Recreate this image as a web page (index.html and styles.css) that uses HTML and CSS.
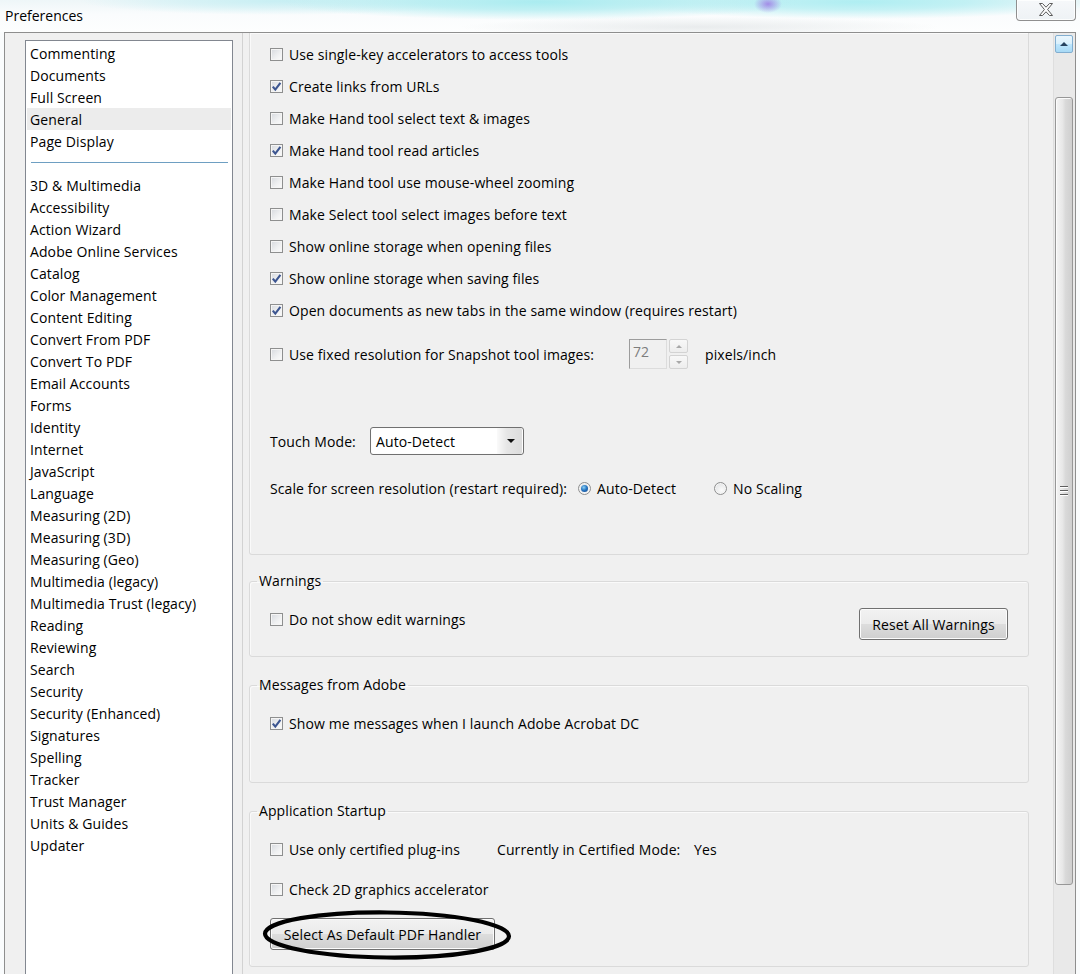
FILE: index.html
```html
<!DOCTYPE html>
<html lang="en">
<head>
<meta charset="utf-8">
<title>Preferences</title>
<link rel="stylesheet" href="styles.css">
</head>
<body>
<div class="window">
  <div class="titlebar">
    <span class="title">Preferences</span>
    <div class="close">
      <svg width="16" height="13" viewBox="0 0 16 13"><polygon points="1.5,0.5 4.5,0.5 8,4.2 11.5,0.5 14.5,0.5 9.6,6.5 14.5,12.5 11.5,12.5 8,8.8 4.5,12.5 1.5,12.5 6.4,6.5" fill="#fdfdfd" stroke="#5c5c5c" stroke-width="1"/></svg>
    </div>
  </div>
  <div class="dialog">
    <div class="leftpane">
      <ul class="catlist">
        <li>Commenting</li>
        <li>Documents</li>
        <li>Full Screen</li>
        <li class="sel">General</li>
        <li>Page Display</li>
        <li class="sep"></li>
        <li>3D &amp; Multimedia</li>
        <li>Accessibility</li>
        <li>Action Wizard</li>
        <li>Adobe Online Services</li>
        <li>Catalog</li>
        <li>Color Management</li>
        <li>Content Editing</li>
        <li>Convert From PDF</li>
        <li>Convert To PDF</li>
        <li>Email Accounts</li>
        <li>Forms</li>
        <li>Identity</li>
        <li>Internet</li>
        <li>JavaScript</li>
        <li>Language</li>
        <li>Measuring (2D)</li>
        <li>Measuring (3D)</li>
        <li>Measuring (Geo)</li>
        <li>Multimedia (legacy)</li>
        <li>Multimedia Trust (legacy)</li>
        <li>Reading</li>
        <li>Reviewing</li>
        <li>Search</li>
        <li>Security</li>
        <li>Security (Enhanced)</li>
        <li>Signatures</li>
        <li>Spelling</li>
        <li>Tracker</li>
        <li>Trust Manager</li>
        <li>Units &amp; Guides</li>
        <li>Updater</li>
      </ul>
    </div>
    <div class="rightpane">
      <div class="groups">
        <div class="group first">
          <div class="rows">
            <div class="row"><span class="cb"></span>Use single-key accelerators to access tools</div>
            <div class="row"><span class="cb on"><svg width="11" height="11" viewBox="0 0 11 11"><path d="M1.8 5.6 L4.3 8.6 L9.4 1.8" fill="none" stroke="#3c5590" stroke-width="2.1"/></svg></span>Create links from URLs</div>
            <div class="row"><span class="cb"></span>Make Hand tool select text &amp; images</div>
            <div class="row"><span class="cb on"><svg width="11" height="11" viewBox="0 0 11 11"><path d="M1.8 5.6 L4.3 8.6 L9.4 1.8" fill="none" stroke="#3c5590" stroke-width="2.1"/></svg></span>Make Hand tool read articles</div>
            <div class="row"><span class="cb"></span>Make Hand tool use mouse-wheel zooming</div>
            <div class="row"><span class="cb"></span>Make Select tool select images before text</div>
            <div class="row"><span class="cb"></span>Show online storage when opening files</div>
            <div class="row"><span class="cb on"><svg width="11" height="11" viewBox="0 0 11 11"><path d="M1.8 5.6 L4.3 8.6 L9.4 1.8" fill="none" stroke="#3c5590" stroke-width="2.1"/></svg></span>Show online storage when saving files</div>
            <div class="row"><span class="cb on"><svg width="11" height="11" viewBox="0 0 11 11"><path d="M1.8 5.6 L4.3 8.6 L9.4 1.8" fill="none" stroke="#3c5590" stroke-width="2.1"/></svg></span>Open documents as new tabs in the same window (requires restart)</div>
            <div class="row res">
              <span class="reslabel"><span class="cb"></span>Use fixed resolution for Snapshot tool images:</span>
              <span class="spinbox">72</span>
              <span class="spinbtns">
                <span class="spin"><span class="sarrow up"></span></span>
                <span class="spin"><span class="sarrow down"></span></span>
              </span>
              <span class="unit">pixels/inch</span>
            </div>
            <div class="row touch">
              <span class="touchlabel">Touch Mode:</span>
              <span class="combo"><span class="combotext">Auto-Detect</span><span class="combobtn"><span class="carrow"></span></span></span>
            </div>
            <div class="row scale">
              <span class="scalelabel">Scale for screen resolution (restart required):</span>
              <span class="radioitem"><span class="radio on"></span>Auto-Detect</span>
              <span class="radioitem"><span class="radio"></span>No Scaling</span>
            </div>
          </div>
        </div>

        <fieldset class="group warnings">
          <legend>Warnings</legend>
          <div class="warnrow">
            <div class="row"><span class="cb"></span>Do not show edit warnings</div>
            <button class="btn reset">Reset All Warnings</button>
          </div>
        </fieldset>

        <fieldset class="group messages">
          <legend>Messages from Adobe</legend>
          <div class="row"><span class="cb on"><svg width="11" height="11" viewBox="0 0 11 11"><path d="M1.8 5.6 L4.3 8.6 L9.4 1.8" fill="none" stroke="#3c5590" stroke-width="2.1"/></svg></span>Show me messages when I launch Adobe Acrobat DC</div>
        </fieldset>

        <fieldset class="group startup">
          <legend>Application Startup</legend>
          <div class="startrows">
            <div class="row">
              <span class="certlabel"><span class="cb"></span>Use only certified plug-ins</span>
              <span class="certmode">Currently in Certified Mode:</span>
              <span>Yes</span>
            </div>
            <div class="row"><span class="cb"></span>Check 2D graphics accelerator</div>
            <div class="btnwrap">
              <button class="btn handler">Select As Default PDF Handler</button>
              <svg class="ellipse" width="252" height="52" viewBox="0 0 252 52"><ellipse cx="125" cy="26" rx="122" ry="22.5" fill="none" stroke="#000" stroke-width="4.2" transform="rotate(0.6 125 26)"/></svg>
            </div>
          </div>
        </fieldset>
      </div>
    </div>
    <div class="scrollbar">
      <div class="sb-up"><span class="uparrow"></span></div>
      <div class="sb-thumb"><span class="grip"><i></i><i></i><i></i></span></div>
    </div>
  </div>
</div>
</body>
</html>
```
FILE: styles.css
```css
* { box-sizing: border-box; }
html, body { margin: 0; padding: 0; }
body {
  width: 1080px;
  height: 974px;
  overflow: hidden;
  background: #fafcfd;
  font-family: "Open Sans", "Noto Sans", sans-serif;
  font-size: 14px;
  color: #000;
}
.window {
  width: 1080px;
  height: 974px;
  display: flex;
  flex-direction: column;
}
.titlebar {
  height: 32px;
  flex: none;
  display: flex;
  justify-content: space-between;
  align-items: flex-start;
  background:
    radial-gradient(ellipse 14px 9px at 768px 4px, rgba(160,130,230,0.9), rgba(160,130,230,0) 100%),
    radial-gradient(ellipse 260px 18px at 540px 2px, rgba(170,236,240,1) 0%, rgba(170,236,240,0.7) 45%, rgba(170,236,240,0) 100%),
    radial-gradient(ellipse 240px 17px at 860px 2px, rgba(175,238,242,1) 0%, rgba(175,238,242,0.7) 45%, rgba(175,238,242,0) 100%),
    radial-gradient(ellipse 200px 14px at 280px 1px, rgba(195,238,243,0.9) 0%, rgba(195,238,243,0.5) 50%, rgba(195,238,243,0) 100%),
    radial-gradient(ellipse 240px 10px at 700px 27px, rgba(220,224,226,0.6), rgba(220,224,226,0) 100%),
    linear-gradient(#eef6f8, #fafcfd 45%, #fdfefe);
}
.title {
  padding-left: 5px;
  line-height: 32px;
  font-size: 14px;
  color: #000;
}
.close {
  width: 60px;
  height: 21px;
  margin-right: 4px;
  border: 1px solid #8f8f8f;
  border-top: none;
  border-radius: 0 0 4px 4px;
  background: linear-gradient(#f6f8fa, #eef2f5);
  box-shadow: inset 0 0 0 1px rgba(255,255,255,0.8);
  display: flex;
  align-items: center;
  justify-content: center;
  padding-bottom: 1px;
}
.dialog {
  flex: 1;
  min-height: 0;
  margin-left: 4px;
  width: 1072px;
  display: flex;
  border: 1px solid #8e8e8e;
  border-bottom: none;
  background: #f0f0f0;
  overflow: hidden;
  letter-spacing: 0.1px;
}
.leftpane {
  width: 238px;
  flex: none;
  padding: 7px 0 0 20px;
  border-right: 1px solid #d2d2d2;
}
.catlist {
  list-style: none;
  margin: 0;
  padding: 1px;
  width: 208px;
  height: 1000px;
  background: #fff;
  border: 1px solid #828790;
}
.catlist li {
  height: 22px;
  line-height: 23px;
  padding-left: 3px;
  white-space: nowrap;
}
.catlist li.sel { background: #ececec; }
.catlist li.sep { position: relative; }
.catlist li.sep::after {
  content: "";
  position: absolute;
  left: 4px;
  right: 3px;
  top: 10px;
  height: 1px;
  background: #6e9fc2;
}
.rightpane {
  width: 810px;
  flex: none;
  overflow: hidden;
  padding-left: 6px;
}
.groups {
  width: 780px;
  display: flex;
  flex-direction: column;
}
.group {
  margin: 18px 0 0 0;
  border: 1px solid #dadada;
  border-radius: 3px;
  padding: 17px 20px 16px 20px;
  min-width: 0;
  box-shadow: inset 1px 1px 0 #fafafa;
}
.group.warnings { margin-top: 16px; }
.group.first {
  margin-top: 0;
  border-top: none;
  border-radius: 0 0 3px 3px;
  padding: 10px 20px 55px 20px;
}
.group legend {
  margin-left: -13px;
  padding: 0 2px;
  line-height: 20px;
  height: 20px;
  font-size: 14px;
}
.rows {
  display: flex;
  flex-direction: column;
  gap: 10px;
}
.row {
  display: flex;
  align-items: center;
  height: 22px;
  white-space: nowrap;
}
.cb {
  width: 13px;
  height: 13px;
  flex: none;
  margin-right: 6px;
  border: 1px solid #8e8f8f;
  background: linear-gradient(135deg, #d6d9de 0%, #f0f1f2 60%, #fbfbfb 100%);
  box-shadow: inset 0 0 0 1px #f5f5f5;
  display: inline-flex;
  align-items: center;
  justify-content: center;
}
.cb svg { display: block; }
.row.res { height: 30px; margin-top: 8px; }
.reslabel {
  width: 359px;
  display: flex;
  align-items: center;
}
.spinbox {
  width: 38px;
  height: 30px;
  border: 1px solid;
  border-color: #9c9c9c #dcdcdc #dcdcdc #9c9c9c;
  color: #7d7d7d;
  padding-left: 3px;
  line-height: 24px;
  align-self: flex-start;
}
.spinbtns {
  display: flex;
  flex-direction: column;
  gap: 2px;
  margin-left: 2px;
  height: 30px;
}
.spin {
  width: 19px;
  height: 14px;
  border: 1px solid #d3d3d3;
  border-radius: 2px;
  background: linear-gradient(#f8f8f8, #ededed);
  display: flex;
  align-items: center;
  justify-content: center;
}
.sarrow {
  width: 0;
  height: 0;
  border-left: 3px solid transparent;
  border-right: 3px solid transparent;
}
.sarrow.up { border-bottom: 3px solid #a8a8a8; }
.sarrow.down { border-top: 3px solid #a8a8a8; }
.unit { margin-left: 17px; }
.row.touch { height: 28px; margin-top: 48px; }
.touchlabel { width: 100px; }
.combo {
  width: 154px;
  height: 28px;
  border: 1px solid #707070;
  border-radius: 3px;
  background: #fff;
  display: flex;
  align-items: center;
  box-shadow: inset 0 0 0 1px #fdfdfd;
}
.combotext { flex: 1; padding-left: 5px; }
.combobtn {
  width: 25px;
  height: 26px;
  margin-right: 1px;
  background: linear-gradient(90deg, #fafafa, #e6e6e6 40%, #dcdcdc);
  display: flex;
  align-items: center;
  justify-content: center;
  border-radius: 0 2px 2px 0;
}
.carrow {
  width: 0;
  height: 0;
  border-left: 4px solid transparent;
  border-right: 4px solid transparent;
  border-top: 4px solid #111;
  margin-left: 2px;
}
.row.scale { margin-top: 12px; }
.scalelabel { width: 308px; }
.radioitem {
  width: 136px;
  display: flex;
  align-items: center;
}
.radio {
  width: 13px;
  height: 13px;
  flex: none;
  margin-right: 6px;
  border-radius: 50%;
  border: 1px solid #8e8f8f;
  background: radial-gradient(circle at 60% 65%, #fbfbfb 0%, #e8e9ea 60%, #d3d6da 100%);
  box-shadow: inset 0 0 0 1px #f5f5f5;
  position: relative;
}
.radio.on::after {
  content: "";
  position: absolute;
  left: 2px;
  top: 2px;
  width: 7px;
  height: 7px;
  border-radius: 50%;
  background: radial-gradient(circle at 40% 35%, #8fd2f5 0%, #2a79c4 45%, #0c3d86 100%);
}
.warnrow {
  display: flex;
  justify-content: space-between;
  align-items: flex-start;
}
.btn {
  height: 32px;
  border: 1px solid #707070;
  border-radius: 3px;
  background: linear-gradient(#f2f2f2 0%, #ebebeb 50%, #dddddd 51%, #cfcfcf 100%);
  box-shadow: inset 0 0 0 1px #fcfcfc;
  font-family: "Open Sans", "Noto Sans", sans-serif;
  font-size: 14px;
  letter-spacing: 0.1px;
  color: #000;
  padding: 0;
  margin: 0;
}
.btn.reset { width: 149px; }
.group.messages { padding-bottom: 48px; }
.startrows {
  display: flex;
  flex-direction: column;
  gap: 18px;
}
.certlabel {
  width: 227px;
  display: flex;
  align-items: center;
}
.certmode { width: 197px; }
.btnwrap {
  position: relative;
  width: 225px;
}
.btn.handler { width: 225px; }
.ellipse {
  position: absolute;
  left: -8px;
  top: -9px;
  pointer-events: none;
}
.scrollbar {
  width: 22px;
  flex: none;
  border-left: 1px solid #dedede;
  background: #e9e9e9;
  padding: 2px 0 0 1px;
  display: flex;
  flex-direction: column;
}
.sb-up {
  width: 18px;
  height: 18px;
  flex: none;
  border: 1px solid #82aed0;
  border-radius: 2px;
  background: linear-gradient(#eaf6fd, #d9f0fc 50%, #bee6fd 51%, #a7d9f5);
  display: flex;
  align-items: center;
  justify-content: center;
}
.uparrow {
  width: 0;
  height: 0;
  border-left: 4px solid transparent;
  border-right: 4px solid transparent;
  border-bottom: 4px solid #27425e;
}
.sb-thumb {
  width: 18px;
  height: 788px;
  flex: none;
  margin-top: 44px;
  border: 1px solid #979797;
  border-radius: 3px;
  background: linear-gradient(90deg, #f4f4f4 0%, #e8e8e8 40%, #d9d9d9 60%, #cfcfcf 100%);
  box-shadow: inset 1px 1px 0 #fbfbfb;
  display: flex;
  align-items: center;
  justify-content: center;
}
.grip {
  display: flex;
  flex-direction: column;
  gap: 2px;
}
.grip i {
  display: block;
  width: 8px;
  height: 1px;
  background: #5f5f5f;
  border-bottom: 1px solid #fff;
  box-sizing: content-box;
}
```
